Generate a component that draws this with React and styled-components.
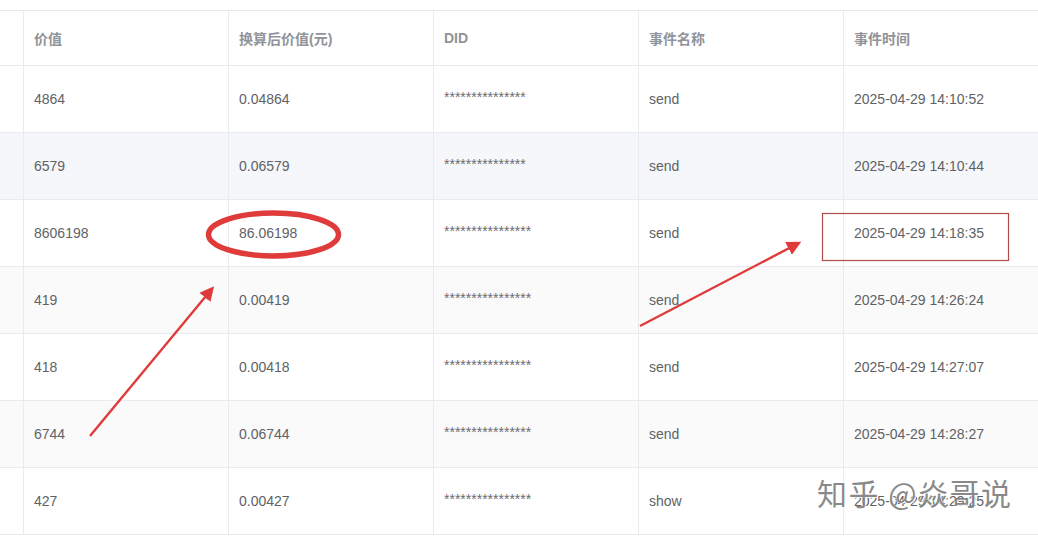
import React from "react";
import styled, { createGlobalStyle } from "styled-components";

const Global = createGlobalStyle`
  html, body { margin: 0; padding: 0; background: #ffffff; }
  body { font-family: "Liberation Sans", Arial, "Noto Sans CJK SC", sans-serif; }
`;

const Page = styled.div`
  position: relative;
  width: 1038px;
  height: 537px;
  overflow: hidden;
  padding-top: 10px;
  box-sizing: border-box;
  background: #fff;
`;

const Table = styled.div`
  border-top: 1px solid #e6e8ed;
  width: 1038px;
`;

const Grid = styled.div`
  display: grid;
  grid-template-columns: 24px 205px 205px 205px 205px 1fr;
  box-sizing: border-box;
  border-bottom: 1px solid #e8ebf0;
  background: ${(p) => p.$bg || "#ffffff"};
`;

const HeaderRow = styled(Grid)`
  height: 55px;
`;

const Row = styled(Grid)`
  height: 67px;
`;

const Cell = styled.div`
  display: flex;
  align-items: center;
  padding-left: 10px;
  border-right: ${(p) => (p.$last ? "none" : "1px solid #e8ebf0")};
  font-size: 14px;
  color: #606266;
  white-space: nowrap;
  overflow: hidden;
  font-family: "Liberation Sans", Arial, "Noto Sans CJK SC", sans-serif;
`;

const EdgeCell = styled(Cell)`
  padding-left: 0;
`;

const HeadCell = styled(Cell)`
  color: #909399;
  font-weight: bold;
  font-size: 14px;
`;

const Stars = styled.span`
  font-size: 14px;
  color: #6a6c70;
  transform: translateY(-2px);
`;

const Overlay = styled.svg`
  position: absolute;
  left: 0;
  top: 0;
  width: 1038px;
  height: 537px;
  pointer-events: none;
`;

const Watermark = styled.div`
  position: absolute;
  left: 817px;
  top: 473px;
  font-family: "Noto Sans CJK SC", "Noto Sans", sans-serif;
  font-size: 30px;
  line-height: 38px;
  color: rgba(105, 105, 105, 0.78);
  text-shadow: 1px 1px 0 rgba(255, 255, 255, 0.9), -1px 0 0 rgba(255, 255, 255, 0.6);
  letter-spacing: 1.5px;
  white-space: nowrap;
`;

const headers = ["价值", "换算后价值(元)", "DID", "事件名称", "事件时间"];

const rows = [
  { v: "4864", c: "0.04864", d: 15, e: "send", t: "2025-04-29 14:10:52", bg: "#ffffff" },
  { v: "6579", c: "0.06579", d: 15, e: "send", t: "2025-04-29 14:10:44", bg: "#f5f7fa" },
  { v: "8606198", c: "86.06198", d: 16, e: "send", t: "2025-04-29 14:18:35", bg: "#ffffff" },
  { v: "419", c: "0.00419", d: 16, e: "send", t: "2025-04-29 14:26:24", bg: "#fafafa" },
  { v: "418", c: "0.00418", d: 16, e: "send", t: "2025-04-29 14:27:07", bg: "#ffffff" },
  { v: "6744", c: "0.06744", d: 16, e: "send", t: "2025-04-29 14:28:27", bg: "#fafafa" },
  { v: "427", c: "0.00427", d: 16, e: "show", t: "2025-04-29 14:29:25", bg: "#ffffff" },
];

const RED = "#e03b3b";

export default function App() {
  return (
    <>
      <Global />
      <Page>
        <Table>
          <HeaderRow>
            <EdgeCell />
            {headers.map((h, i) => (
              <HeadCell key={h} $last={i === headers.length - 1}>
                {h}
              </HeadCell>
            ))}
          </HeaderRow>
          {rows.map((r, i) => (
            <Row key={i} $bg={r.bg}>
              <EdgeCell />
              <Cell>{r.v}</Cell>
              <Cell>{r.c}</Cell>
              <Cell>
                <Stars>{"*".repeat(r.d)}</Stars>
              </Cell>
              <Cell>{r.e}</Cell>
              <Cell $last>{r.t}</Cell>
            </Row>
          ))}
        </Table>
        <Overlay viewBox="0 0 1038 537">
          <defs>
            <marker id="ah" markerWidth="6" markerHeight="6" refX="4" refY="3" orient="auto" markerUnits="strokeWidth">
              <path d="M0,0 L6,3 L0,6 Z" fill={RED} />
            </marker>
          </defs>
          <ellipse cx="273.5" cy="234.5" rx="65" ry="21.5" fill="none" stroke={RED} strokeWidth="5.5" />
          <line x1="90" y1="436" x2="211" y2="290" stroke={RED} strokeWidth="2.4" markerEnd="url(#ah)" />
          <line x1="640" y1="326" x2="797" y2="244" stroke={RED} strokeWidth="2.4" markerEnd="url(#ah)" />
          <rect x="822.5" y="213.5" width="186" height="47" fill="none" stroke="#b34a4a" strokeWidth="1.2" />
        </Overlay>
        <Watermark>知乎 @焱哥说</Watermark>
      </Page>
    </>
  );
}
